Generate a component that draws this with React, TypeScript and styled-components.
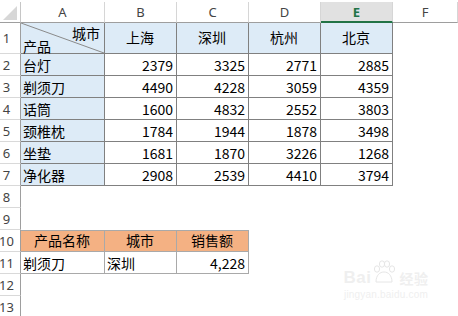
import React from 'react';
import styled, { createGlobalStyle, css } from 'styled-components';

const Global = createGlobalStyle`
  html, body { margin: 0; padding: 0; background: #fff; }
  body { width: 458px; height: 316px; overflow: hidden; }
`;

const FONT = `"Noto Sans CJK SC", "Noto Sans", sans-serif`;

const Sheet = styled.div`
  position: relative;
  display: grid;
  grid-template-columns: 21px 84px 72px 72px 72px 72px 1fr;
  grid-template-rows: 21px 31px repeat(12, 22px);
  width: 458px;
  height: 316px;
  padding-top: 2px;
  box-sizing: border-box;
  overflow: hidden;
  background: #fff;
  font-family: ${FONT};
  font-size: 14px;
  color: #000;
`;

const Corner = styled.div`
  position: relative;
  border-right: 1px solid #c6c6c6;
  border-bottom: 1px solid #9e9e9e;
  svg { position: absolute; left: 3px; top: 3px; }
`;

const ColHead = styled.div<{ $active?: boolean }>`
  display: flex;
  align-items: center;
  justify-content: center;
  box-sizing: border-box;
  border-right: 1px solid #d6d6d6;
  border-bottom: 1px solid #9e9e9e;
  font-family: "Noto Sans", "Open Sans", sans-serif;
  font-size: 13px;
  color: #444;
  ${(p) =>
    p.$active &&
    css`
      background: #e1e1e1;
      color: #217346;
      font-weight: 700;
      border-bottom: 2px solid #217346;
    `}
`;

const RowHead = styled.div`
  display: flex;
  align-items: center;
  justify-content: center;
  padding-right: 7px;
  box-sizing: border-box;
  border-right: 1px solid #9e9e9e;
  border-bottom: 1px solid #d9d9d9;
  font-family: "Noto Sans", "Open Sans", sans-serif;
  font-size: 13px;
  color: #444;
`;

type Fill = 'blue' | 'orange' | 'none';
type Align = 'left' | 'right' | 'center';
type Edge = 'dark' | 'light' | 'none';

const fills: Record<Fill, string> = { blue: '#ddebf7', orange: '#f4b183', none: 'transparent' };
const edges: Record<Edge, string> = { dark: '#808080', light: '#a9a9a9', none: 'transparent' };
const justify: Record<Align, string> = { left: 'flex-start', right: 'flex-end', center: 'center' };

const Cell = styled.div<{ $fill?: Fill; $align?: Align; $edge?: Edge; $top?: boolean; $middle?: boolean }>`
  position: relative;
  display: flex;
  box-sizing: border-box;
  align-items: ${(p) => (p.$middle ? 'center' : 'flex-end')};
  justify-content: ${(p) => justify[p.$align ?? 'left']};
  padding: 0 3px 2px 2px;
  line-height: 16px;
  white-space: nowrap;
  background: ${(p) => fills[p.$fill ?? 'none']};
  ${(p) =>
    p.$edge && p.$edge !== 'none'
      ? css`
          border-right: 1px solid ${edges[p.$edge]};
          border-bottom: 1px solid ${edges[p.$edge]};
        `
      : ''}
  ${(p) => p.$top && css`border-top: 1px solid ${edges[p.$edge ?? 'light']};`}
`;

const DiagCell = styled(Cell)`
  flex-direction: column;
  align-items: stretch;
  justify-content: flex-end;
  padding: 0 4px 0 2px;
  line-height: 12.5px;
  svg { position: absolute; inset: 0; width: 100%; height: 100%; }
`;

const DiagTop = styled.span`
  align-self: flex-end;
`;

const DiagBottom = styled.span`
  align-self: flex-start;
  padding-bottom: 1px;
`;

const Watermark = styled.div`
  position: absolute;
  left: 340px;
  top: 260px;
  width: 92px;
  display: flex;
  flex-direction: column;
  align-items: center;
  color: #efefef;
  font-family: "Liberation Sans", sans-serif;
  pointer-events: none;
`;

const WmLogo = styled.div`
  display: flex;
  align-items: flex-end;
  font-size: 17px;
  font-weight: 700;
  line-height: 16px;
  letter-spacing: 0.5px;
`;

const WmCn = styled.span`
  font-family: ${FONT};
  font-size: 14px;
  margin-left: 2px;
`;

const WmUrl = styled.div`
  font-size: 10px;
  margin-top: 3px;
  letter-spacing: 0.2px;
`;

const cols = ['A', 'B', 'C', 'D', 'E', 'F'];
const cities = ['上海', '深圳', '杭州', '北京'];
const data: [string, number[]][] = [
  ['台灯', [2379, 3325, 2771, 2885]],
  ['剃须刀', [4490, 4228, 3059, 4359]],
  ['话筒', [1600, 4832, 2552, 3803]],
  ['颈椎枕', [1784, 1944, 1878, 3498]],
  ['坐垫', [1681, 1870, 3226, 1268]],
  ['净化器', [2908, 2539, 4410, 3794]],
];

const Blank = () => <Cell />;

export default function App() {
  return (
    <>
      <Global />
      <Sheet>
        <Corner>
          <svg width="15" height="15" viewBox="0 0 15 15">
            <polygon points="14,1 14,15 0,15" fill="#d7d7d7" />
          </svg>
        </Corner>
        {cols.map((c) => (
          <ColHead key={c} $active={c === 'E'}>{c}</ColHead>
        ))}

        <RowHead>1</RowHead>
        <DiagCell $fill="blue" $edge="dark">
          <svg viewBox="0 0 100 100" preserveAspectRatio="none">
            <line x1="0" y1="0" x2="100" y2="100" stroke="#8a8a8a" strokeWidth="1" vectorEffect="non-scaling-stroke" />
          </svg>
          <DiagTop>城市</DiagTop>
          <DiagBottom>产品</DiagBottom>
        </DiagCell>
        {cities.map((c) => (
          <Cell key={c} $fill="blue" $edge="dark" $align="center" $middle>{c}</Cell>
        ))}
        <Blank />

        {data.map(([name, vals], i) => (
          <React.Fragment key={name}>
            <RowHead>{i + 2}</RowHead>
            <Cell $fill="blue" $edge="dark">{name}</Cell>
            {vals.map((v, j) => (
              <Cell key={j} $edge="dark" $align="right">{v}</Cell>
            ))}
            <Blank />
          </React.Fragment>
        ))}

        {[8, 9].map((r) => (
          <React.Fragment key={r}>
            <RowHead>{r}</RowHead>
            {cols.map((c) => <Blank key={c} />)}
          </React.Fragment>
        ))}

        <RowHead>10</RowHead>
        {['产品名称', '城市', '销售额'].map((h) => (
          <Cell key={h} $fill="orange" $edge="light" $top $align="center" $middle>{h}</Cell>
        ))}
        <Blank />
        <Blank />
        <Blank />

        <RowHead>11</RowHead>
        <Cell $edge="light">剃须刀</Cell>
        <Cell $edge="light">深圳</Cell>
        <Cell $edge="light" $align="right">{(4228).toLocaleString('en-US')}</Cell>
        <Blank />
        <Blank />
        <Blank />

        {[12, 13].map((r) => (
          <React.Fragment key={r}>
            <RowHead>{r}</RowHead>
            {cols.map((c) => <Blank key={c} />)}
          </React.Fragment>
        ))}

        <Watermark>
          <WmLogo>
            Bai
            <svg width="26" height="26" viewBox="0 0 26 26">
              <ellipse cx="6" cy="9" rx="2.6" ry="3.2" fill="none" stroke="#e6e6e6" />
              <ellipse cx="11" cy="4" rx="2.6" ry="3.2" fill="none" stroke="#e6e6e6" />
              <ellipse cx="16" cy="4" rx="2.6" ry="3.2" fill="none" stroke="#e6e6e6" />
              <ellipse cx="21" cy="9" rx="2.6" ry="3.2" fill="none" stroke="#e6e6e6" />
              <path d="M5 22 C5 15 9 12 13 12 C17 12 21 15 21 22 Z" fill="none" stroke="#e6e6e6" />
            </svg>
            <WmCn>经验</WmCn>
          </WmLogo>
          <WmUrl>jingyan.baidu.com</WmUrl>
        </Watermark>
      </Sheet>
    </>
  );
}
